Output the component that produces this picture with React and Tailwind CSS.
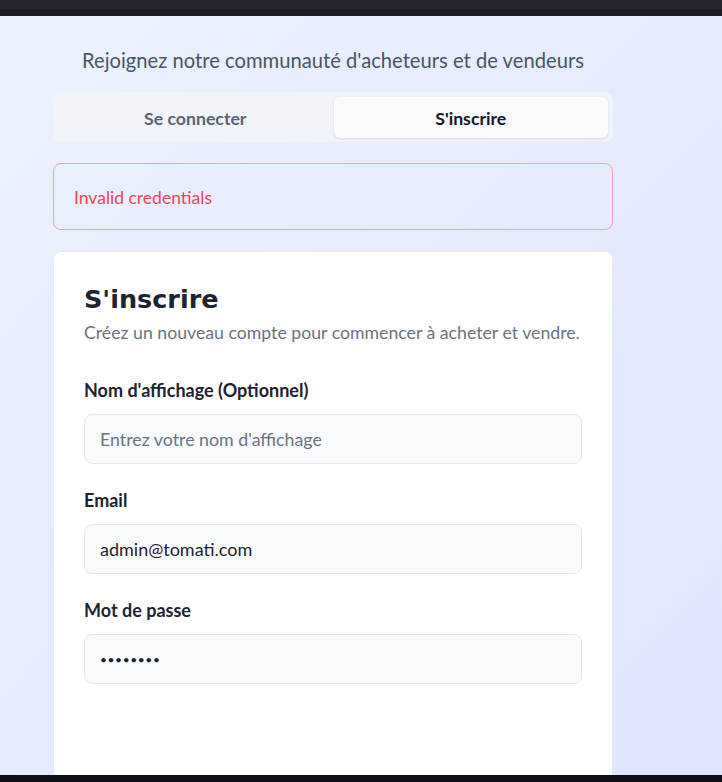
import { useState } from 'react';

export default function App() {
    const [tab, setTab] = useState('signup');
    const [displayName, setDisplayName] = useState('');
    const [email, setEmail] = useState('admin@tomati.com');
    const [password, setPassword] = useState('password');

    return (
        <div className="h-[782px] overflow-hidden flex flex-col bg-[#0f1017] font-['Lato','Noto_Sans',sans-serif]">
            {/* Window chrome */}
            <div className="h-[9px] bg-[#23262f]" />
            <div className="h-[7px] bg-[#1a1d24]" />

            <main className="h-[759px] overflow-hidden bg-gradient-to-br from-[#ebf1fe] to-[#e0e6fc]">
                <div className="ml-[53px] w-[560px] pt-[31px]">
                    <p className="text-center text-[20.2px] leading-[26px] text-[#4b5563]">
                        Rejoignez notre communauté d'acheteurs et de vendeurs
                    </p>

                    {/* Tabs */}
                    <div className="mt-[19px] h-[50px] rounded-lg bg-[#f0f4f9] p-[5px] pb-[4px] grid grid-cols-2 gap-[1px]">
                        <button
                            type="button"
                            onClick={() => setTab('signin')}
                            className={
                                tab === 'signin'
                                    ? 'rounded-md bg-[#fafafa] shadow-sm pt-[3px] text-[17.7px] font-bold text-[#111827]'
                                    : 'rounded-md pt-[3px] text-[17.7px] font-bold text-[#5b6474]'
                            }
                        >
                            Se connecter
                        </button>
                        <button
                            type="button"
                            onClick={() => setTab('signup')}
                            className={
                                tab === 'signup'
                                    ? 'rounded-md bg-[#fafafa] shadow-sm pt-[3px] text-[17.7px] font-bold text-[#111827]'
                                    : 'rounded-md pt-[3px] text-[17.7px] font-bold text-[#5b6474]'
                            }
                        >
                            S'inscrire
                        </button>
                    </div>

                    {/* Error */}
                    <div className="mt-[21px] h-[67px] rounded-lg border border-[#f0a3ad] px-5 flex items-center">
                        <p className="text-[17.5px] text-[#ef4458] pt-[4px]">Invalid credentials</p>
                    </div>

                    {/* Card */}
                    <div className="mt-[21px] h-[560px] rounded-lg bg-white border border-[#e6eaf4] px-[30px] pt-[29px]">
                        <h1 className="font-['DejaVu_Sans',sans-serif] font-bold text-[25.5px] leading-[36px] text-[#1f2230]">
                            S'inscrire
                        </h1>
                        <p className="mt-[4px] text-[17.7px] leading-[24px] text-[#6b7280]">
                            Créez un nouveau compte pour commencer à acheter et vendre.
                        </p>

                        <form className="mt-[33px] flex flex-col" onSubmit={(e) => e.preventDefault()}>
                            <label htmlFor="name" className="block text-[18px] leading-[24px] font-bold text-[#1f2230]">
                                Nom d'affichage (Optionnel)
                            </label>
                            <input
                                id="name"
                                type="text"
                                value={displayName}
                                onChange={(e) => setDisplayName(e.target.value)}
                                placeholder="Entrez votre nom d'affichage"
                                className="mt-[12px] h-[50px] w-full rounded-lg border border-[#e3e7ef] bg-[#f9fafb] px-[15px] text-[17.8px] text-[#1f2230] placeholder-[#6b7280] focus:outline-none"
                            />

                            <label htmlFor="email" className="mt-[24px] block text-[18px] leading-[24px] font-bold text-[#1f2230]">
                                Email
                            </label>
                            <input
                                id="email"
                                type="email"
                                value={email}
                                onChange={(e) => setEmail(e.target.value)}
                                className="mt-[12px] h-[50px] w-full rounded-lg border border-[#e3e7ef] bg-[#f9fafb] px-[15px] text-[18px] text-[#1f2230] focus:outline-none"
                            />

                            <label htmlFor="password" className="mt-[24px] block text-[18px] leading-[24px] font-bold text-[#1f2230]">
                                Mot de passe
                            </label>
                            <input
                                id="password"
                                type="password"
                                value={password}
                                onChange={(e) => setPassword(e.target.value)}
                                className="mt-[12px] h-[50px] w-full rounded-lg border border-[#e3e7ef] bg-[#f9fafb] px-[15px] text-[12px] tracking-[0.6px] text-[#1f2230] focus:outline-none"
                            />
                        </form>
                    </div>
                </div>
            </main>
        </div>
    );
}
